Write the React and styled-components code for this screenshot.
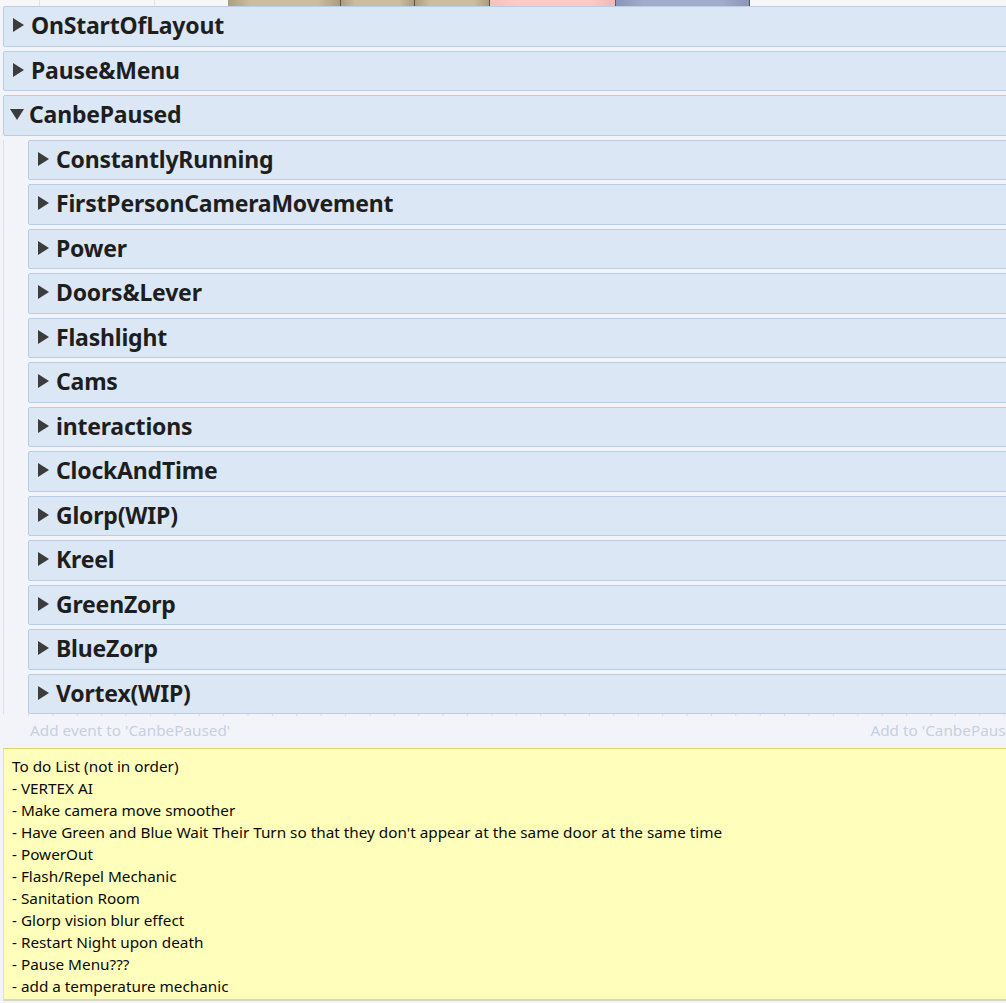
import React from 'react';
import styled, { createGlobalStyle } from 'styled-components';

const GlobalStyle = createGlobalStyle`
  html, body {
    margin: 0;
    padding: 0;
    background: #f3f4fa;
    overflow: hidden;
    font-family: "Noto Sans", "Open Sans", sans-serif;
  }
`;

const subEvents = [
  'ConstantlyRunning',
  'FirstPersonCameraMovement',
  'Power',
  'Doors&Lever',
  'Flashlight',
  'Cams',
  'interactions',
  'ClockAndTime',
  'Glorp(WIP)',
  'Kreel',
  'GreenZorp',
  'BlueZorp',
  'Vortex(WIP)',
];

const todo = [
  'To do List (not in order)',
  '- VERTEX AI',
  '- Make camera move smoother',
  "- Have Green and Blue Wait Their Turn so that they don't appear at the same door at the same time",
  '- PowerOut',
  '- Flash/Repel Mechanic',
  '- Sanitation Room',
  '- Glorp vision blur effect',
  '- Restart Night upon death',
  '- Pause Menu???',
  '- add a temperature mechanic',
];

const tan = 'linear-gradient(90deg,#a89f80,#c9bf9c 20%,#c9bf9c 80%,#a89f80)';

const strip = [
  { w: 40, bg: '#f7f7f7', edge: '#e2e2e2' },
  { w: 115, bg: '#f7f7f7', edge: '#e2e2e2' },
  { w: 73, bg: '#f7f7f7', edge: 'transparent' },
  { w: 113, bg: tan, edge: '#5a5448' },
  { w: 74, bg: tan, edge: '#5a5448' },
  { w: 75, bg: tan, edge: '#5a5448' },
  { w: 126, bg: 'linear-gradient(90deg,#f6c0c0,#ffc8ca 20%,#ffc8ca 80%,#f0b8b8)', edge: '#5a5a6a' },
  { w: 134, bg: 'linear-gradient(90deg,#8b95b8,#a1abcb 20%,#a1abcb 80%,#8b95b8)', edge: '#4c5060' },
];

const Page = styled.div`
  width: 1030px;
`;

const TopStrip = styled.div`
  display: flex;
  height: 6px;
  background: #f7f7f7;
`;

const StripCell = styled.div`
  width: ${(p) => p.$w}px;
  height: 100%;
  background: ${(p) => p.$bg};
  border-right: 1px solid ${(p) => p.$edge};
  box-sizing: border-box;
`;

const Sheet = styled.div`
  padding-left: 3px;
  display: flex;
  flex-direction: column;
`;

const Row = styled.div`
  display: flex;
  align-items: center;
  height: 40.5px;
  box-sizing: border-box;
  margin-bottom: 4px;
  padding-bottom: 2px;
  background: #dce7f5;
  border: 1px solid #b9cde4;
  border-radius: 2px;
  padding-left: ${(p) => (p.$open ? 6 : 9)}px;
`;

const Arrow = styled.span`
  width: 0;
  height: 0;
  margin-right: ${(p) => (p.$open ? 5 : 7)}px;
  ${(p) =>
    p.$open
      ? `border-left: 7.5px solid transparent;
         border-right: 7.5px solid transparent;
         border-top: 11px solid #3c3c3c;`
      : `border-top: 7px solid transparent;
         border-bottom: 7px solid transparent;
         border-left: 11px solid #3c3c3c;`}
`;

const Title = styled.span`
  font-size: 23px;
  font-weight: 700;
  color: #1e1e1e;
  letter-spacing: -0.2px;
`;

const Children = styled.div`
  border-left: 1px solid #dde0e8;
  padding-left: 24px;
  display: flex;
  flex-direction: column;

  & > div:last-child {
    margin-bottom: 0;
  }
`;

const Ticks = styled.div`
  height: 2px;
  margin-left: 25px;
  background-image: linear-gradient(90deg, #d8dbe3 1px, transparent 1px);
  background-size: 24.4px 2px;
`;

const AddLine = styled.div`
  display: flex;
  justify-content: space-between;
  align-items: flex-start;
  height: 32px;
  box-sizing: border-box;
  padding: 4px 3px 0 27px;
  font-size: 15.3px;
  line-height: 20px;
  color: #c7cfe0;
`;

const Comment = styled.div`
  background: #ffffbb;
  border-top: 1px solid #ddd66a;
  border-left: 1px solid #e8e3a8;
  border-bottom: 2px solid #d9d5c0;
  padding: 6px 8px 2px;
  font-size: 15.3px;
  line-height: 22px;
  color: #0a0a0a;
`;

const Line = styled.div`
  white-space: nowrap;
`;

const Group = ({ name, open }) => (
  <Row $open={open}>
    <Arrow $open={open} />
    <Title>{name}</Title>
  </Row>
);

export default function App() {
  return (
    <Page>
      <GlobalStyle />
      <TopStrip>
        {strip.map((c, i) => (
          <StripCell key={i} $w={c.w} $bg={c.bg} $edge={c.edge} />
        ))}
      </TopStrip>
      <Sheet>
        <Group name="OnStartOfLayout" />
        <Group name="Pause&Menu" />
        <Group name="CanbePaused" open />
        <Children>
          {subEvents.map((n) => (
            <Group key={n} name={n} />
          ))}
        </Children>
        <Ticks />
        <AddLine>
          <span>Add event to 'CanbePaused'</span>
          <span>Add to 'CanbePaused'</span>
        </AddLine>
        <Comment>
          {todo.map((t, i) => (
            <Line key={i}>{t}</Line>
          ))}
        </Comment>
      </Sheet>
    </Page>
  );
}
